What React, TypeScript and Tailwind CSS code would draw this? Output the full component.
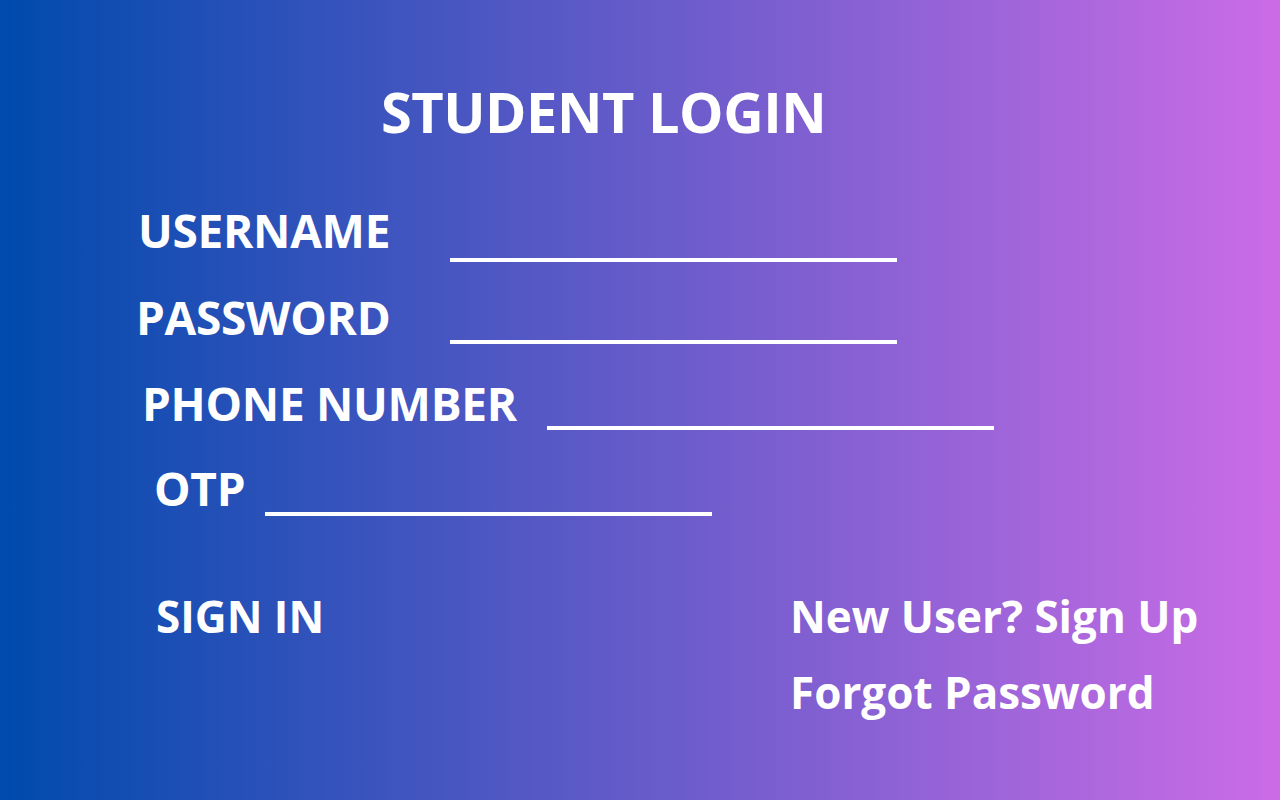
const font = { fontFamily: '"Open Sans", "Liberation Sans", sans-serif' };

function Field({ label, left, lineLeft, height, lineTop }: { label: string; left: number; lineLeft: number; height: number; lineTop: number }) {
  return (
    <div className="relative flex items-start" style={{ height, paddingLeft: left }}>
      <span className="text-[46px] font-bold leading-none text-white tracking-[-0.3px] whitespace-nowrap">{label}</span>
      <div className="absolute h-[4px] w-[447px] bg-white" style={{ left: lineLeft, marginTop: lineTop }} />
    </div>
  );
}

export default function App() {
  return (
    <div
      className="w-[1280px] h-[800px] overflow-hidden bg-[linear-gradient(90deg,#004aad,#cb6ce6)] pt-[83px]"
      style={font}
    >
      {/* Title */}
      <div className="h-[124px] pl-[381px]">
        <h1 className="text-[56px] font-bold leading-none text-white tracking-[-0.5px] whitespace-nowrap">STUDENT LOGIN</h1>
      </div>

      {/* Form rows */}
      <Field label="USERNAME" left={138} lineLeft={450} height={87} lineTop={51} />
      <Field label="PASSWORD" left={136} lineLeft={450} height={86} lineTop={46} />
      <Field label="PHONE NUMBER" left={142} lineLeft={547} height={85} lineTop={46} />
      <Field label="OTP" left={154} lineLeft={265} height={129} lineTop={47} />

      {/* Actions */}
      <div className="flex">
        <div className="w-[790px] pl-[156px]">
          <span className="text-[44px] font-bold leading-none text-white whitespace-nowrap">SIGN IN</span>
        </div>
        <div className="flex flex-col gap-[31px]">
          <span className="text-[44px] font-bold leading-[45px] text-white whitespace-nowrap">New User? Sign Up</span>
          <span className="text-[44px] font-bold leading-[45px] text-white whitespace-nowrap">Forgot Password</span>
        </div>
      </div>
    </div>
  );
}
